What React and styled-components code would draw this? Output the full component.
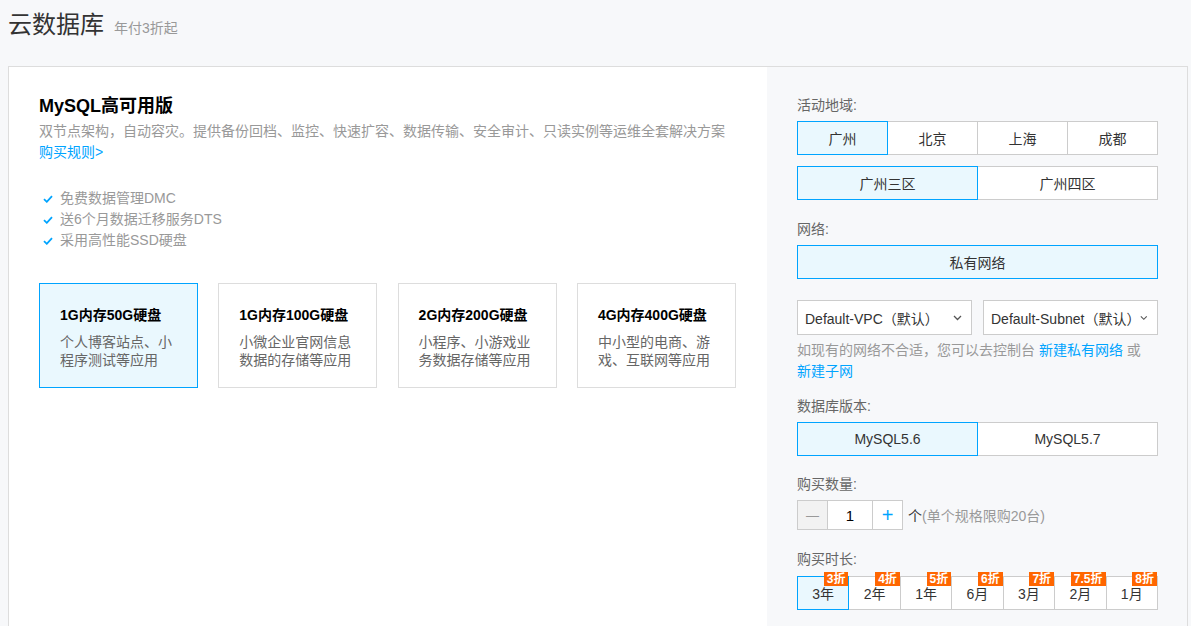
import React, { useState } from "react";
import styled, { createGlobalStyle, css } from "styled-components";

const GlobalStyle = createGlobalStyle`
  html, body {
    margin: 0;
    padding: 0;
    background: #f7f8fa;
    font-family: "Liberation Sans", "Noto Sans CJK SC", sans-serif;
    color: #333;
  }
  * {
    box-sizing: border-box;
  }
`;

const FEATURES = ["免费数据管理DMC", "送6个月数据迁移服务DTS", "采用高性能SSD硬盘"];

const SPECS = [
  { title: "1G内存50G硬盘", desc: "个人博客站点、小程序测试等应用" },
  { title: "1G内存100G硬盘", desc: "小微企业官网信息数据的存储等应用" },
  { title: "2G内存200G硬盘", desc: "小程序、小游戏业务数据存储等应用" },
  { title: "4G内存400G硬盘", desc: "中小型的电商、游戏、互联网等应用" },
];

const REGIONS = ["广州", "北京", "上海", "成都"];
const ZONES = ["广州三区", "广州四区"];
const VERSIONS = ["MySQL5.6", "MySQL5.7"];
const DURATIONS = [
  { label: "3年", off: "3折" },
  { label: "2年", off: "4折" },
  { label: "1年", off: "5折" },
  { label: "6月", off: "6折" },
  { label: "3月", off: "7折" },
  { label: "2月", off: "7.5折" },
  { label: "1月", off: "8折" },
];

function CheckIcon() {
  return (
    <svg width="10" height="8" viewBox="0 0 10 8">
      <path d="M1 4.2 L3.8 6.8 L9 1.2" fill="none" stroke="#00a4ff" strokeWidth="1.8" />
    </svg>
  );
}

function Chevron() {
  return (
    <svg width="9" height="6" viewBox="0 0 9 6">
      <path d="M1 1 L4.5 4.5 L8 1" fill="none" stroke="#555" strokeWidth="1.3" />
    </svg>
  );
}

function App() {
  const [spec, setSpec] = useState(0);
  const [region, setRegion] = useState(0);
  const [zone, setZone] = useState(0);
  const [version, setVersion] = useState(0);
  const [count, setCount] = useState(1);
  const [duration, setDuration] = useState(0);

  return (
    <Page>
      <GlobalStyle />
      <Header>
        <Title>云数据库</Title>
        <SubTitle>年付3折起</SubTitle>
      </Header>
      <Panel>
        <Left>
          <ProductName>MySQL高可用版</ProductName>
          <Desc>
            双节点架构，自动容灾。提供备份回档、监控、快速扩容、数据传输、安全审计、只读实例等运维全套解决方案
          </Desc>
          <Link href="#">购买规则&gt;</Link>
          <Features>
            {FEATURES.map((f) => (
              <Feature key={f}>
                <CheckIcon />
                <span>{f}</span>
              </Feature>
            ))}
          </Features>
          <Specs>
            {SPECS.map((s, i) => (
              <SpecCard key={s.title} $active={spec === i} onClick={() => setSpec(i)}>
                <SpecTitle>{s.title}</SpecTitle>
                <SpecDesc>{s.desc}</SpecDesc>
              </SpecCard>
            ))}
          </Specs>
        </Left>

        <Right>
          <Field $gap={28}>
            <Label>活动地域:</Label>
            <ButtonRow>
              {REGIONS.map((r, i) => (
                <Option key={r} $active={region === i} onClick={() => setRegion(i)}>
                  {r}
                </Option>
              ))}
            </ButtonRow>
            <ButtonRow $top={11}>
              {ZONES.map((z, i) => (
                <Option key={z} $active={zone === i} onClick={() => setZone(i)}>
                  {z}
                </Option>
              ))}
            </ButtonRow>
          </Field>

          <Field $gap={19}>
            <Label>网络:</Label>
            <ButtonRow>
              <Option $active>私有网络</Option>
            </ButtonRow>
            <SelectRow>
              <Select>
                <span>Default-VPC（默认）</span>
                <Chevron />
              </Select>
              <Select>
                <span>Default-Subnet（默认）</span>
                <Chevron />
              </Select>
            </SelectRow>
            <Hint>
              如现有的网络不合适，您可以去控制台 <Link href="#">新建私有网络</Link> 或{" "}
              <Link href="#">新建子网</Link>
            </Hint>
          </Field>

          <Field $gap={14}>
            <Label>数据库版本:</Label>
            <ButtonRow>
              {VERSIONS.map((v, i) => (
                <Option key={v} $active={version === i} onClick={() => setVersion(i)}>
                  {v}
                </Option>
              ))}
            </ButtonRow>
          </Field>

          <Field $gap={18}>
            <Label>购买数量:</Label>
            <CounterRow>
              <Counter>
                <StepButton $minus onClick={() => setCount(Math.max(1, count - 1))}>
                  —
                </StepButton>
                <CountValue>{count}</CountValue>
                <StepButton onClick={() => setCount(Math.min(20, count + 1))}>+</StepButton>
              </Counter>
              <CountNote>
                <b>个</b>(单个规格限购20台)
              </CountNote>
            </CounterRow>
          </Field>

          <Field $gap={19}>
            <Label $bottom={7}>购买时长:</Label>
            <ButtonRow>
              {DURATIONS.map((d, i) => (
                <Option
                  key={d.label}
                  $active={duration === i}
                  onClick={() => setDuration(i)}
                >
                  {d.label}
                  <Badge>{d.off}</Badge>
                </Option>
              ))}
            </ButtonRow>
          </Field>
        </Right>
      </Panel>
    </Page>
  );
}

const Page = styled.div`
  padding: 0 8px;
  min-height: 626px;
`;

const Header = styled.div`
  display: flex;
  align-items: baseline;
  height: 66px;
  padding-top: 8px;
`;

const Title = styled.h1`
  margin: 0;
  font-size: 24px;
  font-weight: normal;
  line-height: 34px;
  color: #333;
`;

const SubTitle = styled.span`
  margin-left: 10px;
  font-size: 14px;
  color: #999;
`;

const Panel = styled.div`
  display: grid;
  grid-template-columns: 758px 420px;
  width: 1180px;
  border: 1px solid #ddd;
  background: #fff;
  min-height: 620px;
`;

const Left = styled.div`
  padding: 27px 30px 30px;
  background: #fff;
`;

const ProductName = styled.h2`
  margin: 0;
  font-size: 18px;
  line-height: 24px;
  font-weight: bold;
  color: #000;
`;

const Desc = styled.p`
  margin: 3px 0 0;
  font-size: 14px;
  line-height: 21px;
  color: #999;
`;

const Link = styled.a`
  color: #00a4ff;
  text-decoration: none;
  font-size: 14px;
  line-height: 21px;
`;

const Features = styled.ul`
  list-style: none;
  margin: 25px 0 0;
  padding: 0 0 0 4px;
`;

const Feature = styled.li`
  display: flex;
  align-items: center;
  gap: 7px;
  font-size: 14px;
  line-height: 21px;
  color: #999;
`;

const Specs = styled.div`
  display: flex;
  gap: 20.3px;
  margin-top: 32px;
`;

const SpecCard = styled.div`
  flex: 0 0 159px;
  height: 105px;
  padding: 21px 18px 0 20px;
  border: 1px solid ${(p) => (p.$active ? "#00a4ff" : "#ddd")};
  background: ${(p) => (p.$active ? "#eaf8fe" : "#fff")};
  cursor: pointer;
`;

const SpecTitle = styled.div`
  font-size: 14px;
  line-height: 20px;
  font-weight: bold;
  color: #000;
`;

const SpecDesc = styled.div`
  margin-top: 8px;
  font-size: 14px;
  line-height: 18px;
  color: #666;
`;

const Right = styled.div`
  padding: 0 29px 40px 30px;
  background: #f7f8fa;
`;

const Field = styled.div`
  margin-top: ${(p) => p.$gap}px;
`;

const Label = styled.div`
  font-size: 14px;
  line-height: 20px;
  color: #666;
  margin-bottom: ${(p) => p.$bottom || 6}px;
`;

const ButtonRow = styled.div`
  display: flex;
  margin-top: ${(p) => p.$top || 0}px;
`;

const Option = styled.div`
  position: relative;
  flex: 1 1 0;
  height: 34px;
  display: flex;
  align-items: center;
  justify-content: center;
  font-size: 14px;
  color: #333;
  background: #fff;
  border: 1px solid #ccc;
  cursor: pointer;

  & + & {
    margin-left: -1px;
  }

  ${(p) =>
    p.$active &&
    css`
      border-color: #00a4ff;
      background: #eaf8fe;
      z-index: 1;
    `}
`;

const Badge = styled.span`
  position: absolute;
  top: -5px;
  right: 0;
  padding: 0 3px;
  height: 14px;
  line-height: 14px;
  font-size: 12px;
  font-weight: bold;
  color: #fff;
  background: #ff6600;
  z-index: 2;
`;

const SelectRow = styled.div`
  display: grid;
  grid-template-columns: 175px 175px;
  justify-content: space-between;
  margin-top: 21px;
`;

const Select = styled.div`
  height: 35px;
  display: flex;
  align-items: center;
  justify-content: space-between;
  padding: 0 9px 0 7px;
  border: 1px solid #ccc;
  background: #fff;
  font-size: 14px;
  color: #333;
  white-space: nowrap;
`;

const Hint = styled.div`
  margin-top: 5px;
  font-size: 14px;
  line-height: 21px;
  color: #999;
`;

const CounterRow = styled.div`
  display: flex;
  align-items: center;
  gap: 5px;
`;

const Counter = styled.div`
  display: flex;
  height: 30px;
  border: 1px solid #ccc;
  background: #fff;
`;

const StepButton = styled.div`
  width: 29px;
  display: flex;
  align-items: center;
  justify-content: center;
  font-size: ${(p) => (p.$minus ? "13px" : "20px")};
  color: ${(p) => (p.$minus ? "#999" : "#00a4ff")};
  background: ${(p) => (p.$minus ? "#f2f2f2" : "#fff")};
  cursor: pointer;
`;

const CountValue = styled.div`
  width: 46px;
  display: flex;
  align-items: center;
  justify-content: center;
  border-left: 1px solid #ccc;
  border-right: 1px solid #ccc;
  font-size: 15px;
  color: #000;
`;

const CountNote = styled.span`
  font-size: 14px;
  color: #999;

  b {
    font-weight: normal;
    color: #333;
  }
`;

export default App;
